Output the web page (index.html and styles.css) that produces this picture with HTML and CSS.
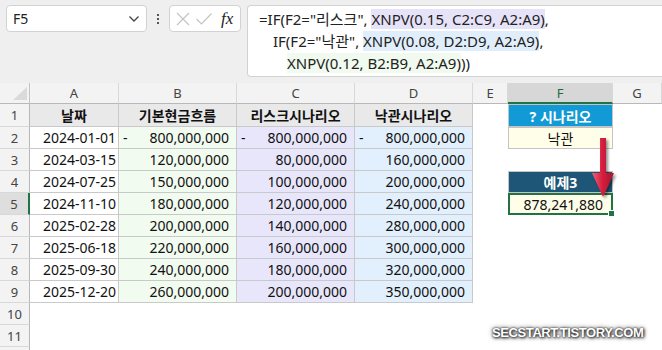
FILE: index.html
```html
<!DOCTYPE html>
<html lang="ko">
<head>
    <meta charset="UTF-8">
    <title>XNPV 시나리오</title>
    <link rel="stylesheet" href="styles.css">
</head>
<body>
    <div class="bar">
        <div class="namebox">
            <span>F5</span>
            <svg width="12" height="8" viewBox="0 0 12 8"><path d="M1.5 1.5 L6 6 L10.5 1.5" fill="none" stroke="#444" stroke-width="1.3"/></svg>
        </div>
        <div class="dots"><i></i><i></i><i></i></div>
        <div class="fxbox">
            <svg width="16" height="16" viewBox="0 0 16 16"><path d="M2 2 L14 14 M14 2 L2 14" stroke="#c4c4c4" stroke-width="1.2"/></svg>
            <svg width="18" height="16" viewBox="0 0 18 16"><path d="M1.5 8 L6.5 13 L16.5 2.5" fill="none" stroke="#c4c4c4" stroke-width="1.2"/></svg>
            <span class="fx">fx</span>
        </div>
        <div class="formula">
            <div class="fline">=IF(F2="리스크", <span class="hl-c">XNPV(0.15, C2:C9, A2:A9)</span>,</div>
            <div class="fline ind1">IF(F2="낙관", <span class="hl-d">XNPV(0.08, D2:D9, A2:A9)</span>,</div>
            <div class="fline ind2"><span class="hl-b">XNPV(0.12, B2:B9, A2:A9)</span>))</div>
        </div>
    </div>

    <div class="sheet">
        <!-- column headers -->
        <div class="corner"><span class="tri"></span></div>
        <div class="colh">A</div>
        <div class="colh">B</div>
        <div class="colh">C</div>
        <div class="colh">D</div>
        <div class="colh">E</div>
        <div class="colh active">F</div>
        <div class="colh">G</div>

        <!-- row 1 -->
        <div class="rowh">1</div>
        <div class="t hd">날짜</div>
        <div class="t hd">기본현금흐름</div>
        <div class="t hd">리스크시나리오</div>
        <div class="t hd">낙관시나리오</div>
        <div class="c"></div>
        <div class="f blue">? 시나리오</div>
        <div class="c"></div>

        <!-- row 2 -->
        <div class="rowh">2</div>
        <div class="t date">2024-01-01</div>
        <div class="t num g"><span class="neg">-</span>800,000,000</div>
        <div class="t num p"><span class="neg">-</span>800,000,000</div>
        <div class="t num s"><span class="neg">-</span>800,000,000</div>
        <div class="c"></div>
        <div class="f yel">낙관</div>
        <div class="c"></div>

        <!-- row 3 -->
        <div class="rowh">3</div>
        <div class="t date">2024-03-15</div>
        <div class="t num g">120,000,000</div>
        <div class="t num p">80,000,000</div>
        <div class="t num s">160,000,000</div>
        <div class="c"></div>
        <div class="c"></div>
        <div class="c"></div>

        <!-- row 4 -->
        <div class="rowh">4</div>
        <div class="t date">2024-07-25</div>
        <div class="t num g">150,000,000</div>
        <div class="t num p">100,000,000</div>
        <div class="t num s">200,000,000</div>
        <div class="c"></div>
        <div class="f navy">예제3</div>
        <div class="c"></div>

        <!-- row 5 -->
        <div class="rowh sel">5</div>
        <div class="t date">2024-11-10</div>
        <div class="t num g">180,000,000</div>
        <div class="t num p">120,000,000</div>
        <div class="t num s">240,000,000</div>
        <div class="c"></div>
        <div class="f yel result">878,241,880<span class="handle"></span></div>
        <div class="c"></div>

        <!-- row 6 -->
        <div class="rowh">6</div>
        <div class="t date">2025-02-28</div>
        <div class="t num g">200,000,000</div>
        <div class="t num p">140,000,000</div>
        <div class="t num s">280,000,000</div>
        <div class="c"></div>
        <div class="c"></div>
        <div class="c"></div>

        <!-- row 7 -->
        <div class="rowh">7</div>
        <div class="t date">2025-06-18</div>
        <div class="t num g">220,000,000</div>
        <div class="t num p">160,000,000</div>
        <div class="t num s">300,000,000</div>
        <div class="c"></div>
        <div class="c"></div>
        <div class="c"></div>

        <!-- row 8 -->
        <div class="rowh">8</div>
        <div class="t date">2025-09-30</div>
        <div class="t num g">240,000,000</div>
        <div class="t num p">180,000,000</div>
        <div class="t num s">320,000,000</div>
        <div class="c"></div>
        <div class="c"></div>
        <div class="c"></div>

        <!-- row 9 -->
        <div class="rowh">9</div>
        <div class="t date">2025-12-20</div>
        <div class="t num g">260,000,000</div>
        <div class="t num p">200,000,000</div>
        <div class="t num s">350,000,000</div>
        <div class="c"></div>
        <div class="c"></div>
        <div class="c"></div>

        <div class="rowh">10</div>
        <div class="c wide"></div>

        <div class="rowh">11</div>
        <div class="c wide"></div>

        <div class="rowh"></div>
        <div class="c wide"></div>

        <!-- arrow from F2 down to F5 -->
        <svg class="arrow" width="34" height="70" viewBox="0 0 34 70">
            <defs>
                <linearGradient id="red" x1="0" y1="0" x2="1" y2="0">
                    <stop offset="0" stop-color="#f0607a"/>
                    <stop offset="0.45" stop-color="#d8203f"/>
                    <stop offset="1" stop-color="#a3122c"/>
                </linearGradient>
                <filter id="sh" x="-50%" y="-20%" width="200%" height="150%">
                    <feGaussianBlur in="SourceAlpha" stdDeviation="1.6"/>
                    <feOffset dx="2" dy="2"/>
                    <feComponentTransfer><feFuncA type="linear" slope="0.45"/></feComponentTransfer>
                    <feMerge><feMergeNode/><feMergeNode in="SourceGraphic"/></feMerge>
                </filter>
            </defs>
            <path d="M10 3 L16 3 L16 38 L24 38 L13 62 L2 38 L10 38 Z" fill="url(#red)" filter="url(#sh)"/>
        </svg>

        <div class="mark">SECSTART.TISTORY.COM</div>
    </div>
</body>
</html>
```

FILE: styles.css
```css
body {
    margin: 0;
    background: #fff;
    font-family: "Noto Sans", "Noto Sans CJK KR", sans-serif;
    color: #111;
    overflow: hidden;
}

/* formula bar */
.bar {
    height: 83px;
    background: #efefef;
    display: flex;
    align-items: flex-start;
    padding: 5px 0 0 6px;
    box-sizing: border-box;
}

.namebox {
    width: 141px;
    height: 27px;
    box-sizing: border-box;
    background: #fff;
    border: 1px solid #d2d2d2;
    border-radius: 4px;
    display: flex;
    align-items: center;
    justify-content: space-between;
    padding: 0 6px 0 6px;
    font-size: 14px;
    color: #222;
}

.dots {
    width: 22px;
    height: 27px;
    display: flex;
    flex-direction: column;
    align-items: center;
    justify-content: center;
    gap: 2px;
}

.dots i {
    width: 2px;
    height: 2px;
    background: #555;
}

.fxbox {
    width: 72px;
    height: 27px;
    box-sizing: border-box;
    background: #fff;
    border: 1px solid #d2d2d2;
    border-radius: 4px;
    display: flex;
    align-items: center;
    padding: 0 5px 0 5px;
    gap: 4px;
}

.fx {
    font-family: "Liberation Serif", serif;
    font-style: italic;
    font-size: 17px;
    color: #222;
    margin-left: 4px;
}

.formula {
    margin-left: 6px;
    flex: 1;
    height: 72px;
    box-sizing: border-box;
    background: #fff;
    border: 1px solid #d2d2d2;
    border-right: none;
    border-radius: 4px 0 0 4px;
    padding: 2px 0 0 11px;
    font-size: 15px;
    color: #222;
}

.fline {
    height: 22px;
    line-height: 22px;
    white-space: pre;
}

.ind1 { padding-left: 14px; }
.ind2 { padding-left: 28px; }

.hl-c { background: #e6e3f9; }
.hl-d { background: #e0eefb; }
.hl-b { background: #f0faee; }

/* sheet grid */
.sheet {
    position: relative;
    display: grid;
    grid-template-columns: 30px 89px 118px 118px 118px 35px 105px 1fr;
    grid-template-rows: 21px 23px repeat(11, 22px);
    font-size: 14px;
}

.corner {
    background: #f3f3f3;
    border-right: 1px solid #c4c4c4;
    border-bottom: 1px solid #b8b8b8;
    position: relative;
}

.tri {
    position: absolute;
    right: 2px;
    bottom: 3px;
    width: 0;
    height: 0;
    border-left: 14px solid transparent;
    border-bottom: 13px solid #dadada;
}

.colh {
    background: #f3f3f3;
    border-right: 1px solid #d8d8d8;
    border-bottom: 1px solid #b8b8b8;
    text-align: center;
    line-height: 20px;
    font-size: 13px;
    color: #444;
}

.colh.active {
    background: #d7d7d7;
    color: #1d6b3c;
    border-bottom: 2px solid #217346;
}

.rowh {
    background: #f3f3f3;
    border-right: 1px solid #b8b8b8;
    border-bottom: 1px solid #d8d8d8;
    text-align: center;
    font-size: 13px;
    color: #444;
    display: flex;
    align-items: center;
    justify-content: center;
}

.rowh.sel {
    background: #dedede;
    border-right: 2px solid #217346;
}

.c { background: #fff; }
.wide { grid-column: 2 / 9; }

.t {
    border-right: 1px solid #c9c9c9;
    border-bottom: 1px solid #c9c9c9;
    display: flex;
    align-items: center;
    white-space: nowrap;
}

.hd {
    background: #e9e9e9;
    font-weight: bold;
    font-size: 14px;
    justify-content: center;
}

.date {
    justify-content: flex-end;
    padding-right: 2px;
}

.num {
    justify-content: flex-end;
    padding: 0 7px 0 4px;
}

.neg { margin-right: auto; }

.g { background: #f1fbef; }
.p { background: #e8e6fa; }
.s { background: #e2effc; }

.f {
    border: 1px solid #c4c4c4;
    display: flex;
    align-items: center;
    justify-content: center;
    font-size: 14px;
}

.blue {
    background: #129ad6;
    color: #fff;
    font-weight: bold;
    border-color: #c4c4c4;
}

.yel {
    background: #fefee9;
}

.navy {
    background: #1d5676;
    color: #fff;
    font-weight: bold;
}

.result {
    position: relative;
    border: 2px solid #217346;
    justify-content: flex-end;
    padding-right: 8px;
}

.handle {
    position: absolute;
    right: -4px;
    bottom: -4px;
    width: 5px;
    height: 5px;
    background: #217346;
    border: 1px solid #fff;
}

.arrow {
    position: absolute;
    left: 590px;
    top: 52px;
}

.mark {
    position: absolute;
    left: 492px;
    top: 242px;
    font-family: "Liberation Sans", sans-serif;
    font-weight: bold;
    font-size: 13px;
    letter-spacing: -0.4px;
    color: #fff;
    text-shadow: 0 0 2px #222, 1px 1px 3px #222, 0 0 5px #444;
}
```
